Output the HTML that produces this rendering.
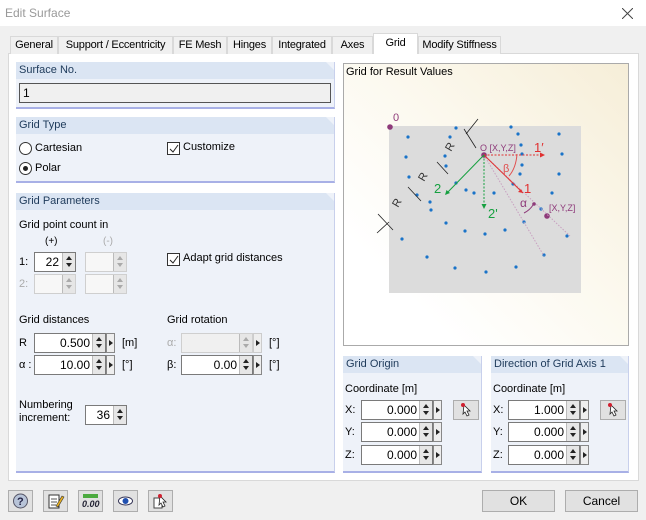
<!DOCTYPE html>
<html><head><meta charset="utf-8"><style>
*{box-sizing:border-box;margin:0;padding:0}
body{width:646px;height:520px;background:#f0f0f0;font-family:"Liberation Sans",Arial,sans-serif;font-size:11px;color:#000;position:relative;overflow:hidden}
.a{position:absolute;white-space:nowrap}
.tab{position:absolute;top:36px;height:18px;border:1px solid #d9d9d9;border-bottom:none;background:#f0f0f0;font-size:11px;text-align:center;line-height:16px;white-space:nowrap;letter-spacing:-0.2px}
.grp{position:absolute;background:#eef2f9;border-right:1px solid #c8d0ec;border-bottom:2px solid #a8b0e6}
.gh{position:absolute;left:0;top:0;right:0;height:17px;background:#dbe5f3;color:#1e3a5a;padding-left:3px;line-height:17px;clip-path:polygon(0 0,calc(100% - 8px) 0,100% 8px,100% 100%,0 100%)}
.inp{position:absolute;height:20px;background:#fff;border:1px solid #7a7a7a;text-align:right;line-height:18px;padding-right:2px;font-size:12px}
.dis{background:#f7f7f7;border-color:#cfcfcf}
.sp{position:absolute;width:13px;height:18px;background:#e6e6e6;border-left:1px solid #bbb}
.sp:before{content:"";position:absolute;left:3px;top:3px;border:3.5px solid transparent;border-bottom:4px solid #222;border-top:none}
.sp:after{content:"";position:absolute;left:3px;top:10px;border:3.5px solid transparent;border-top:4px solid #222;border-bottom:none}
.dis .sp:before{border-bottom-color:#aaa}.dis .sp:after{border-top-color:#aaa}
.ar{position:absolute;width:9px;height:20px;background:#eee;border:1px solid #888}
.ar:after{content:"";position:absolute;left:2px;top:6px;border:3px solid transparent;border-left:4px solid #222;border-right:none}
.cb{position:absolute;width:13px;height:13px;border:1px solid #333;background:#fff}
.btn{position:absolute;background:#e1e1e1;border:1px solid #adadad;text-align:center;line-height:20px;font-size:12px}
.ib{position:absolute;top:490px;width:25px;height:22px;background:#e1e1e1;border:1px solid #adadad}
.pick{position:absolute;width:26px;height:20px;background:#e1e1e1;border:1px solid #adadad}
</style></head><body>
<div class="a" style="left:0;top:0;width:646px;height:26px;background:#fff"></div>
<div class="a" style="left:5px;top:6px;color:#999;font-size:12px">Edit Surface</div>
<svg class="a" style="left:622px;top:8px" width="11" height="11"><path d="M0 0L11 11M11 0L0 11" stroke="#444" stroke-width="1"/></svg>

<div class="a" style="left:8px;top:53px;width:631px;height:428px;background:#fff;border:1px solid #d9d9d9"></div>
<div class="tab" style="left:10px;width:48px">General</div>
<div class="tab" style="left:58px;width:115px">Support / Eccentricity</div>
<div class="tab" style="left:173px;width:54px">FE Mesh</div>
<div class="tab" style="left:227px;width:45px">Hinges</div>
<div class="tab" style="left:272px;width:60px">Integrated</div>
<div class="tab" style="left:332px;width:41px">Axes</div>
<div class="tab" style="left:373px;top:33px;height:21px;width:45px;background:#fff;line-height:18px">Grid</div>
<div class="tab" style="left:418px;width:83px">Modify Stiffness</div>

<div class="grp" style="left:16px;top:62px;width:319px;height:47px"><div class="gh">Surface No.</div></div>
<div class="a" style="left:19px;top:83px;width:312px;height:20px;background:#f0f0f0;border:1px solid #555;padding-left:3px;line-height:18px;font-size:12px">1</div>

<div class="grp" style="left:16px;top:117px;width:319px;height:66px"><div class="gh">Grid Type</div></div>
<div class="a" style="left:19px;top:142px;width:13px;height:13px;border:1px solid #333;border-radius:50%;background:#fff"></div>
<div class="a" style="left:35px;top:142px">Cartesian</div>
<div class="a" style="left:19px;top:162px;width:13px;height:13px;border:1px solid #333;border-radius:50%;background:#fff"><div class="a" style="left:3px;top:3px;width:5px;height:5px;border-radius:50%;background:#222"></div></div>
<div class="a" style="left:35px;top:162px">Polar</div>
<div class="cb" style="left:167px;top:142px"></div>
<svg class="a" style="left:168px;top:143px" width="12" height="12"><path d="M2 6L5 9L10 2" stroke="#222" fill="none"/></svg>
<div class="a" style="left:183px;top:141px">Customize</div>

<div class="grp" style="left:16px;top:193px;width:319px;height:280px"><div class="gh">Grid Parameters</div></div>
<div class="a" style="left:19px;top:219px">Grid point count in</div>
<div class="a" style="left:45px;top:236px;font-size:10px">(+)</div>
<div class="a" style="left:103px;top:236px;font-size:10px;color:#aaa">(-)</div>
<div class="a" style="left:19px;top:256px">1:</div>
<div class="inp" style="left:34px;top:252px;width:42px;padding-right:16px">22<div class="sp" style="right:0;top:0"></div></div>
<div class="inp dis" style="left:85px;top:252px;width:42px"><div class="sp" style="right:0;top:0"></div></div>
<div class="a" style="left:19px;top:278px;color:#aaa">2:</div>
<div class="inp dis" style="left:34px;top:274px;width:42px"><div class="sp" style="right:0;top:0"></div></div>
<div class="inp dis" style="left:85px;top:274px;width:42px"><div class="sp" style="right:0;top:0"></div></div>
<div class="cb" style="left:167px;top:253px"></div>
<svg class="a" style="left:168px;top:254px" width="12" height="12"><path d="M2 6L5 9L10 2" stroke="#222" fill="none"/></svg>
<div class="a" style="left:183px;top:252px">Adapt grid distances</div>

<div class="a" style="left:19px;top:314px">Grid distances</div>
<div class="a" style="left:167px;top:314px">Grid rotation</div>
<div class="a" style="left:19px;top:337px">R</div>
<div class="inp" style="left:34px;top:333px;width:72px;padding-right:15px">0.500<div class="sp" style="right:0;top:0"></div></div><div class="ar" style="left:106px;top:333px"></div>
<div class="a" style="left:122px;top:337px">[m]</div>
<div class="a" style="left:19px;top:359px">α :</div>
<div class="inp" style="left:34px;top:355px;width:72px;padding-right:15px">10.00<div class="sp" style="right:0;top:0"></div></div><div class="ar" style="left:106px;top:355px"></div>
<div class="a" style="left:122px;top:359px">[°]</div>
<div class="a" style="left:167px;top:337px;color:#aaa">α:</div>
<div class="inp dis" style="left:181px;top:333px;width:72px;background:#f0f0f0"><div class="sp" style="right:0;top:0"></div></div><div class="ar" style="left:253px;top:333px;border-color:#ccc"></div>
<div class="a" style="left:269px;top:337px">[°]</div>
<div class="a" style="left:167px;top:359px">β:</div>
<div class="inp" style="left:181px;top:355px;width:72px;padding-right:15px">0.00<div class="sp" style="right:0;top:0"></div></div><div class="ar" style="left:253px;top:355px"></div>
<div class="a" style="left:269px;top:359px">[°]</div>
<div class="a" style="left:19px;top:399px;line-height:13px">Numbering<br>increment:</div>
<div class="inp" style="left:85px;top:405px;width:42px;padding-right:16px">36<div class="sp" style="right:0;top:0"></div></div>

<div class="a" style="left:343px;top:63px;width:286px;height:283px;border:1px solid #aaa;background:linear-gradient(225deg,#f6eed8 0%,#fcf9ef 45%,#fff 80%)"></div>
<div class="a" style="left:346px;top:66px">Grid for Result Values</div>
<svg class="a" style="left:340px;top:60px" width="300" height="250" font-family="Liberation Sans,Arial,sans-serif">
<rect x="49" y="66" width="192" height="167" fill="#dcdcdc"/>
<g fill="#1a73c8">
<circle cx="68" cy="77" r="1.6"/><circle cx="66" cy="97" r="1.6"/><circle cx="69" cy="117" r="1.6"/><circle cx="77" cy="135" r="1.6"/><circle cx="91" cy="150" r="1.6"/><circle cx="106" cy="163" r="1.6"/><circle cx="125" cy="171" r="1.6"/><circle cx="145" cy="174" r="1.6"/><circle cx="165" cy="170" r="1.6"/><circle cx="184" cy="162" r="1.6"/><circle cx="201" cy="149" r="1.6"/><circle cx="227" cy="176" r="1.6"/><circle cx="204" cy="195" r="1.6"/><circle cx="176" cy="207" r="1.6"/><circle cx="146" cy="212" r="1.6"/><circle cx="115" cy="208" r="1.6"/><circle cx="87" cy="197" r="1.6"/><circle cx="62" cy="179" r="1.6"/>
<circle cx="116" cy="68" r="1.6"/><circle cx="110" cy="77" r="1.6"/><circle cx="105" cy="96" r="1.6"/><circle cx="106" cy="106" r="1.6"/><circle cx="116" cy="123" r="1.6"/><circle cx="126" cy="130" r="1.6"/><circle cx="134" cy="133" r="1.6"/><circle cx="154" cy="133" r="1.6"/><circle cx="173" cy="124" r="1.6"/><circle cx="180" cy="114" r="1.6"/><circle cx="182" cy="105" r="1.6"/><circle cx="182" cy="94" r="1.6"/><circle cx="181" cy="85" r="1.6"/><circle cx="178" cy="74" r="1.6"/><circle cx="171" cy="67" r="1.6"/><circle cx="219" cy="74" r="1.6"/><circle cx="222" cy="94" r="1.6"/><circle cx="219" cy="114" r="1.6"/><circle cx="212" cy="133" r="1.6"/><circle cx="90" cy="142" r="1.6"/>
</g>
<circle cx="50" cy="67" r="2.8" fill="#8e3a7a"/>
<text x="53" y="61" fill="#8e3a7a" font-size="11">0</text>
<circle cx="144" cy="95" r="2.8" fill="#8e3a7a"/>
<text x="140" y="91" fill="#8e3a7a" font-size="9">O [X,Y,Z]</text>
<circle cx="207" cy="156" r="2.8" fill="#8e3a7a"/>
<text x="209" y="151" fill="#8e3a7a" font-size="9">[X,Y,Z]</text>
<path d="M144 95L230 176M144 95L204 196" stroke="#c8a0c0" stroke-dasharray="1.5 1.5"/>
<path d="M144 95L183 133" stroke="#e03030" stroke-width="1"/><path d="M183 133l-5 -1l3 -3z" fill="#e03030"/>
<path d="M144 95L203 95" stroke="#e03030" stroke-dasharray="2 1.5"/><path d="M205 95l-5 -2.5v5z" fill="#e03030"/>
<path d="M177 94Q176 108 169 116" stroke="#e05050" fill="none"/>
<text x="163" y="112" fill="#e05050" font-size="11">β</text>
<text x="184" y="133" fill="#e03030" font-size="13">1</text>
<text x="194" y="92" fill="#e03030" font-size="13">1′</text>
<path d="M144 95L106 134" stroke="#16a040"/><path d="M105 135l1.5 -5l3.5 3z" fill="#16a040"/>
<path d="M144 95L144 147" stroke="#16a040" stroke-dasharray="2 1.5"/><path d="M144 149l-2.5 -5h5z" fill="#16a040"/>
<text x="94" y="133" fill="#16a040" font-size="13">2</text>
<text x="148" y="158" fill="#16a040" font-size="13">2'</text>
<path d="M193 145Q190 150 184 153" stroke="#8e3a7a" fill="none"/><circle cx="194" cy="144" r="1.8" fill="#8e3a7a"/>
<text x="180" y="147" fill="#8e3a7a" font-size="12">α</text>
<g stroke="#222" fill="none" stroke-width="0.8">
<path d="M138 59L126 74M124 69L136 88"/><path d="M97 102L108 114M68 127L81 141M37 173L49 162M38 154L53 170"/>
</g>
<g fill="#333" font-size="11"><text x="0" y="0" transform="translate(111,92) rotate(-60)">R</text><text x="0" y="0" transform="translate(84,122) rotate(-60)">R</text><text x="0" y="0" transform="translate(58,148) rotate(-60)">R</text></g>
</svg>

<div class="grp" style="left:343px;top:356px;width:139px;height:117px"><div class="gh">Grid Origin</div></div>
<div class="a" style="left:345px;top:383px">Coordinate [m]</div>
<div class="a" style="left:345px;top:404px">X:</div><div class="a" style="left:345px;top:426px">Y:</div><div class="a" style="left:345px;top:449px">Z:</div>
<div class="inp" style="left:361px;top:400px;width:72px;padding-right:15px">0.000<div class="sp" style="right:0;top:0"></div></div><div class="ar" style="left:433px;top:400px"></div>
<div class="inp" style="left:361px;top:422px;width:72px;padding-right:15px">0.000<div class="sp" style="right:0;top:0"></div></div><div class="ar" style="left:433px;top:422px"></div>
<div class="inp" style="left:361px;top:445px;width:72px;padding-right:15px">0.000<div class="sp" style="right:0;top:0"></div></div><div class="ar" style="left:433px;top:445px"></div>
<div class="pick" style="left:453px;top:400px"><svg width="24" height="18"><path d="M10 4l6 6h-3l2 4-2 1-2-4-2 2z" fill="#fff" stroke="#222" stroke-width="0.8"/><circle cx="9" cy="4" r="2" fill="#d02030"/></svg></div>

<div class="grp" style="left:491px;top:356px;width:138px;height:117px"><div class="gh">Direction of Grid Axis 1</div></div>
<div class="a" style="left:493px;top:383px">Coordinate [m]</div>
<div class="a" style="left:493px;top:404px">X:</div><div class="a" style="left:493px;top:426px">Y:</div><div class="a" style="left:493px;top:449px">Z:</div>
<div class="inp" style="left:508px;top:400px;width:72px;padding-right:15px">1.000<div class="sp" style="right:0;top:0"></div></div><div class="ar" style="left:580px;top:400px"></div>
<div class="inp" style="left:508px;top:422px;width:72px;padding-right:15px">0.000<div class="sp" style="right:0;top:0"></div></div><div class="ar" style="left:580px;top:422px"></div>
<div class="inp" style="left:508px;top:445px;width:72px;padding-right:15px">0.000<div class="sp" style="right:0;top:0"></div></div><div class="ar" style="left:580px;top:445px"></div>
<div class="pick" style="left:600px;top:400px"><svg width="24" height="18"><path d="M10 4l6 6h-3l2 4-2 1-2-4-2 2z" fill="#fff" stroke="#222" stroke-width="0.8"/><circle cx="9" cy="4" r="2" fill="#d02030"/></svg></div>

<div class="ib" style="left:8px"><svg width="23" height="20"><circle cx="11.5" cy="10" r="7" fill="#b8c4d8" stroke="#556"/><text x="8" y="14" font-size="11" font-weight="bold" fill="#224">?</text></svg></div>
<div class="ib" style="left:43px"><svg width="23" height="20"><rect x="5" y="4" width="10" height="13" fill="#fff" stroke="#333"/><path d="M7 8h6M7 11h6M7 14h5" stroke="#555"/><path d="M12 15l6-10 2 1-6 10z" fill="#e8b020" stroke="#333" stroke-width="0.6"/></svg></div>
<div class="ib" style="left:78px"><svg width="23" height="20"><rect x="4" y="3" width="15" height="4" fill="#4caa40"/><text x="3" y="16" font-size="9" font-style="italic" font-weight="bold" fill="#223">0.00</text></svg></div>
<div class="ib" style="left:113px"><svg width="23" height="20"><ellipse cx="11.5" cy="10" rx="7" ry="4" fill="#fff" stroke="#335"/><circle cx="11.5" cy="10" r="3" fill="#2050b0"/></svg></div>
<div class="ib" style="left:148px"><svg width="23" height="20"><rect x="5" y="7" width="8" height="10" fill="#fff" stroke="#444"/><path d="M11 5l6 6h-3l2 4-2 1-2-4-2 2z" fill="#fff" stroke="#222" stroke-width="0.8"/><circle cx="11" cy="5" r="2" fill="#d02030"/></svg></div>
<div class="btn" style="left:482px;top:490px;width:73px;height:22px">OK</div>
<div class="btn" style="left:565px;top:490px;width:73px;height:22px">Cancel</div>
</body></html>
